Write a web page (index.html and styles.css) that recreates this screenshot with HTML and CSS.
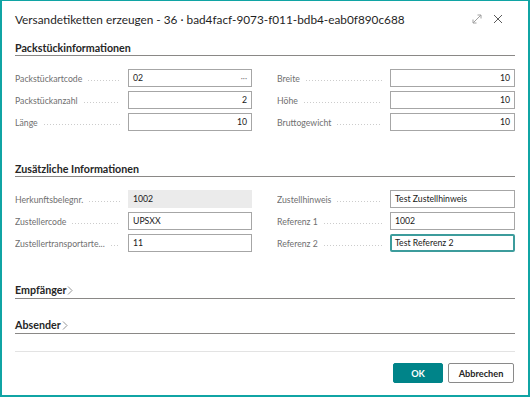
FILE: index.html
```html
<!DOCTYPE html>
<html lang="de">
<head>
<meta charset="utf-8">
<link rel="stylesheet" href="styles.css">
</head>
<body>
<div class="dialog">
  <div class="titlebar">
    <h1 class="title">Versandetiketten erzeugen - 36 · bad4facf-9073-f011-bdb4-eab0f890c688</h1>
    <div class="tools">
      <svg class="icon" width="10" height="10" viewBox="0 0 10 10"><path d="M1 9 L9 1 M5.5 1 H9 V4.5 M1 5.5 V9 H4.5" fill="none" stroke="#a0a0a0" stroke-width="1"/></svg>
      <svg class="icon" width="10" height="10" viewBox="0 0 10 10"><path d="M1 1 L9 9 M9 1 L1 9" fill="none" stroke="#5a5a5a" stroke-width="1"/></svg>
    </div>
  </div>

  <section class="group">
    <h2 class="ghead">Packstückinformationen</h2>
    <div class="grid">
      <div class="field"><span class="label">Packstückartcode</span><span class="input with-dots">02<span class="more">···</span></span></div>
      <div class="field"><span class="label">Breite</span><span class="input num">10</span></div>
      <div class="field"><span class="label">Packstückanzahl</span><span class="input num">2</span></div>
      <div class="field"><span class="label">Höhe</span><span class="input num">10</span></div>
      <div class="field"><span class="label">Länge</span><span class="input num">10</span></div>
      <div class="field"><span class="label">Bruttogewicht</span><span class="input num">10</span></div>
    </div>
  </section>

  <section class="group g2">
    <h2 class="ghead">Zusätzliche Informationen</h2>
    <div class="grid">
      <div class="field"><span class="label">Herkunftsbelegnr.</span><span class="input ro">1002</span></div>
      <div class="field"><span class="label">Zustellhinweis</span><span class="input">Test Zustellhinweis</span></div>
      <div class="field"><span class="label">Zustellercode</span><span class="input">UPSXX</span></div>
      <div class="field"><span class="label">Referenz 1</span><span class="input">1002</span></div>
      <div class="field"><span class="label">Zustellertransportarte...</span><span class="input">11</span></div>
      <div class="field"><span class="label">Referenz 2</span><span class="input focus">Test Referenz 2</span></div>
    </div>
  </section>

  <h2 class="ghead collapsed c1">Empfänger<svg class="chev" width="6" height="9" viewBox="0 0 6 9"><path d="M1 0.5 L5 4.5 L1 8.5" fill="none" stroke="#8a8a8a" stroke-width="0.9"/></svg></h2>
  <h2 class="ghead collapsed c2">Absender<svg class="chev" width="6" height="9" viewBox="0 0 6 9"><path d="M1 0.5 L5 4.5 L1 8.5" fill="none" stroke="#8a8a8a" stroke-width="0.9"/></svg></h2>

  <div class="footer">
    <button class="btn primary">OK</button>
    <button class="btn">Abbrechen</button>
  </div>
</div>
</body>
</html>
```
FILE: styles.css
```css
* { box-sizing: border-box; }
html, body { margin: 0; padding: 0; background: #fff; }
body {
  font-family: "Lato", "Open Sans", sans-serif;
  color: #212121;
}
.dialog {
  width: 530px;
  height: 397px;
  border: 2px solid #10a4a4;
  border-top-width: 1px;
  padding: 0 13px;
  display: flex;
  flex-direction: column;
  overflow: hidden;
}
.titlebar {
  display: flex;
  align-items: center;
  justify-content: space-between;
  height: 36px;
}
.title {
  margin: 0;
  font-size: 11.8px;
  font-weight: 400;
  color: #1f1f1f;
  white-space: nowrap;
}
.tools {
  display: flex;
  gap: 11px;
  padding-right: 12px;
}
.icon { display: block; }
.ghead {
  margin: 0;
  font-size: 10.7px;
  font-weight: 700;
  color: #262626;
  border-bottom: 1px solid #8a8886;
  height: 19px;
  line-height: 14px;
  padding-top: 4px;
}
.grid {
  display: grid;
  grid-template-columns: 237px 238px;
  column-gap: 25px;
  row-gap: 4px;
  margin-top: 13px;
}
.g2 { margin-top: 27px; }
.field {
  display: flex;
  align-items: center;
  height: 18px;
}
.label {
  width: 113px;
  flex: none;
  font-size: 8.7px;
  color: #707070;
  white-space: nowrap;
  overflow: hidden;
  display: flex;
  align-items: center;
  gap: 6px;
}
.label::after {
  content: "";
  flex: 1;
  height: 1px;
  background: repeating-linear-gradient(to right, #cccccc 0 1px, transparent 1px 3px);
  margin-right: 8px;
  margin-top: 4px;
  min-width: 6px;
}
.input {
  flex: 1;
  height: 18px;
  border: 1px solid #a6a6a6;
  font-size: 8.7px;
  line-height: 16px;
  padding: 0 4px;
  color: #1a1a1a;
  display: flex;
  align-items: center;
  white-space: nowrap;
}
.input.num { justify-content: flex-end; }
.input.ro { background: #ebebeb; border-color: #ebebeb; }
.input.focus { border: 2px solid #3c9c9c; padding: 0 3px; border-radius: 2px; }
.with-dots { justify-content: space-between; }
.more { color: #777; font-size: 8px; }
.collapsed {
  display: flex;
  align-items: center;
  gap: 1px;
  padding-top: 1px;
}
.c1 { margin-top: 28px; }
.c2 { margin-top: 16px; }
.chev { display: block; margin-top: 1px; }
.footer {
  margin-top: 17px;
  border-top: 1px solid #e3e3e3;
  display: flex;
  justify-content: flex-end;
  gap: 5px;
  padding-top: 11px;
  padding-right: 1px;
}
.btn {
  font-family: "Lato", "Open Sans", sans-serif;
  font-size: 9.2px;
  height: 20px;
  padding: 0;
  border: 1px solid #8a8a8a;
  background: #fff;
  color: #262626;
  width: 66px;
  border-radius: 2px;
  font-weight: 700;
}
.btn.primary {
  width: 50px;
  background: #008489;
  border-color: #008489;
  color: #fff;
}
```
